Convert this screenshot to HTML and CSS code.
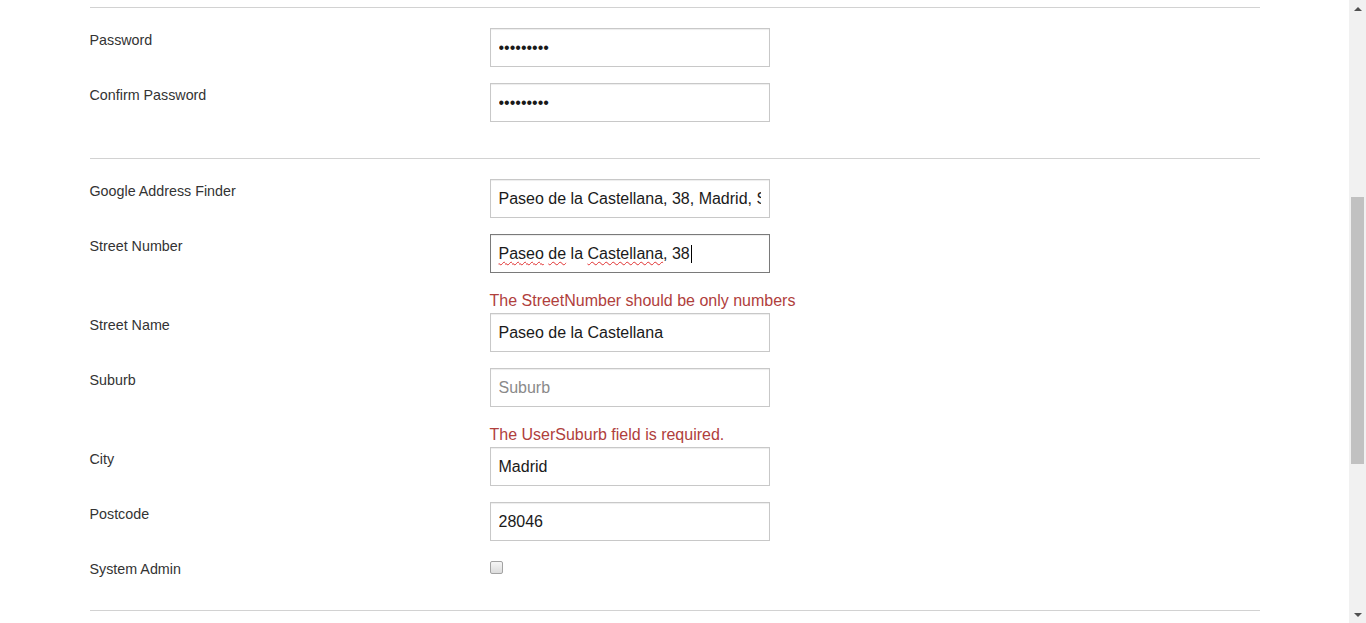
FILE: index.html
```html
<!DOCTYPE html>
<html lang="en">
<head>
<meta charset="utf-8">
<title>Edit User</title>
<link rel="stylesheet" href="styles.css">
</head>
<body>
<div class="page">
  <main class="main">
    <form class="container">
      <hr class="sep first">
      <div class="row">
        <label class="label" for="pw">Password</label>
        <div class="control"><input class="field" id="pw" type="password" value="123456789"></div>
      </div>
      <div class="row">
        <label class="label" for="pw2">Confirm Password</label>
        <div class="control"><input class="field" id="pw2" type="password" value="123456789"></div>
      </div>
      <hr class="sep">
      <div class="row">
        <label class="label" for="gaf">Google Address Finder</label>
        <div class="control"><input class="field" id="gaf" type="text" value="Paseo de la Castellana, 38, Madrid, Spain"></div>
      </div>
      <div class="row with-error">
        <label class="label" for="sn">Street Number</label>
        <div class="control">
          <div class="field focused" id="sn" role="textbox"><span class="typo">Paseo</span> <span class="typo">de</span> la <span class="typo">Castellana</span>, 38<span class="caret"></span></div>
          <div class="error">The StreetNumber should be only numbers</div>
        </div>
      </div>
      <div class="row">
        <label class="label" for="sname">Street Name</label>
        <div class="control"><input class="field" id="sname" type="text" value="Paseo de la Castellana"></div>
      </div>
      <div class="row with-error">
        <label class="label" for="sub">Suburb</label>
        <div class="control">
          <input class="field" id="sub" type="text" placeholder="Suburb">
          <div class="error">The UserSuburb field is required.</div>
        </div>
      </div>
      <div class="row">
        <label class="label" for="city">City</label>
        <div class="control"><input class="field" id="city" type="text" value="Madrid"></div>
      </div>
      <div class="row">
        <label class="label" for="pc">Postcode</label>
        <div class="control"><input class="field" id="pc" type="text" value="28046"></div>
      </div>
      <div class="row check-row">
        <label class="label" for="adm">System Admin</label>
        <div class="control"><input class="check" id="adm" type="checkbox"></div>
      </div>
      <hr class="sep">
    </form>
  </main>
  <div class="scrollbar" aria-hidden="true">
    <div class="arrow up"></div>
    <div class="track"><div class="thumb"></div></div>
    <div class="arrow down"></div>
  </div>
</div>
</body>
</html>
```
FILE: styles.css
```css
html, body {
  margin: 0;
  padding: 0;
  background: #fff;
}
body {
  font-family: "Liberation Sans", Arial, sans-serif;
  color: #333;
}
.page {
  display: flex;
  height: 623px;
  overflow: hidden;
}
.main {
  flex: 1;
  min-width: 0;
}
.container {
  width: 1170px;
  margin: 0 auto;
}
.sep {
  border: 0;
  border-top: 1px solid #d2d2d2;
  margin: 36px 0 20px;
  height: 0;
}
.sep.first {
  margin-top: 7px;
}
.row {
  display: flex;
  margin-bottom: 16px;
}
.row.with-error {
  margin-bottom: 1px;
}
.row.check-row {
  margin-bottom: 0;
  height: 17px;
}
.label {
  width: 400px;
  flex: none;
  font-size: 14.3px;
  line-height: 20px;
  padding-top: 2px;
  color: #333;
}
.control {
  display: flex;
  flex-direction: column;
}
.field {
  box-sizing: border-box;
  width: 280px;
  height: 39px;
  margin: 0;
  padding: 0 8px;
  border: 1px solid #c8c8c8;
  background: #fff;
  box-shadow: inset 0 1px 1px rgba(0, 0, 0, 0.075);
  font-family: "Liberation Sans", Arial, sans-serif;
  font-size: 16px;
  color: #1a1a1a;
  outline: none;
}
.field::placeholder {
  color: #8a8a8a;
}
div.field {
  display: block;
  line-height: 37px;
  white-space: nowrap;
  overflow: hidden;
}
.field.focused {
  border-color: #7a7a7a;
}
.typo {
  text-decoration: underline wavy #e03030;
  text-decoration-thickness: 1px;
  text-underline-offset: 2px;
}
.caret {
  display: inline-block;
  width: 1px;
  height: 18px;
  background: #000;
  margin-left: 1px;
  vertical-align: -4px;
}
.error {
  margin-top: 17px;
  font-size: 16px;
  line-height: 22px;
  color: #b0403c;
  white-space: nowrap;
}
.check {
  appearance: none;
  -webkit-appearance: none;
  box-sizing: border-box;
  width: 13px;
  height: 13px;
  margin: 4px 0 0;
  border: 1px solid #a3a3a3;
  border-radius: 2px;
  background: linear-gradient(#f6f6f6, #dcdcdc);
}
.scrollbar {
  width: 17px;
  flex: none;
  background: #f1f1f1;
  display: flex;
  flex-direction: column;
}
.arrow {
  height: 17px;
  display: flex;
  align-items: center;
  justify-content: center;
}
.arrow::before {
  content: "";
  width: 0;
  height: 0;
  border-left: 4px solid transparent;
  border-right: 4px solid transparent;
}
.arrow.up::before {
  border-bottom: 4px solid #505050;
}
.arrow.down::before {
  border-top: 4px solid #505050;
}
.track {
  flex: 1;
  padding: 180px 2px 0;
}
.thumb {
  height: 267px;
  background: #c1c1c1;
}
```
